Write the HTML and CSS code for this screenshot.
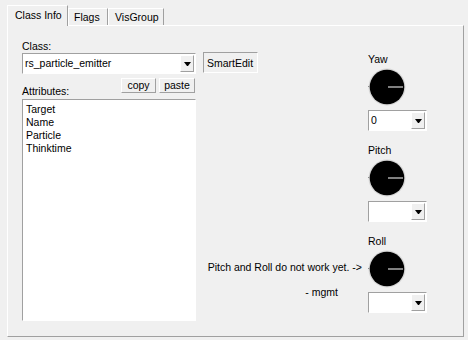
FILE: index.html
```html
<!DOCTYPE html>
<html lang="en">
  <head>
    <meta charset="UTF-8" />
    <title>Object Properties</title>
    <link rel="stylesheet" href="styles.css">
  </head>
  <body>
    <div class="dialog">
      <div class="tabs">
        <div class="tab active">Class Info</div>
        <div class="tab flags">Flags</div>
        <div class="tab visgroup">VisGroup</div>
      </div>

      <div class="panel">
        <div class="col-left">
          <div class="label">Class:</div>
          <div class="combo class-combo">
            <span class="combo-text">rs_particle_emitter</span>
            <span class="drop"></span>
          </div>
          <div class="attr-bar">
            <div class="label attr-label">Attributes:</div>
            <div class="btns">
              <button class="small-btn copy">copy</button>
              <button class="small-btn paste">paste</button>
            </div>
          </div>
          <ul class="listbox">
            <li>Target</li>
            <li>Name</li>
            <li>Particle</li>
            <li>Thinktime</li>
          </ul>
        </div>

        <div class="col-mid">
          <button class="smart-btn">SmartEdit</button>
          <div class="note">
            <p>Pitch and Roll do not work yet. -&gt;</p>
            <p class="sig">- mgmt</p>
          </div>
        </div>

        <div class="col-right">
          <div class="angle">
            <div class="label">Yaw</div>
            <svg class="dial" width="38" height="38" viewBox="0 0 38 38">
              <circle cx="19" cy="19" r="18.5" fill="#d4d4d4" />
              <circle cx="19" cy="19" r="17.3" fill="#000" />
              <rect x="20" y="18.5" width="15" height="1" fill="#fff" />
              <rect x="0" y="18" width="1" height="1" fill="#8a8a8a" />
            </svg>
            <div class="combo small-combo">
              <span class="combo-text">0</span>
              <span class="drop"></span>
            </div>
          </div>
          <div class="angle">
            <div class="label">Pitch</div>
            <svg class="dial" width="38" height="38" viewBox="0 0 38 38">
              <circle cx="19" cy="19" r="18.5" fill="#d4d4d4" />
              <circle cx="19" cy="19" r="17.3" fill="#000" />
              <rect x="20" y="18.5" width="15" height="1" fill="#fff" />
              <rect x="0" y="18" width="1" height="1" fill="#8a8a8a" />
            </svg>
            <div class="combo small-combo">
              <span class="combo-text"></span>
              <span class="drop"></span>
            </div>
          </div>
          <div class="angle">
            <div class="label">Roll</div>
            <svg class="dial" width="38" height="38" viewBox="0 0 38 38">
              <circle cx="19" cy="19" r="18.5" fill="#d4d4d4" />
              <circle cx="19" cy="19" r="17.3" fill="#000" />
              <rect x="20" y="18.5" width="15" height="1" fill="#fff" />
              <rect x="0" y="18" width="1" height="1" fill="#8a8a8a" />
            </svg>
            <div class="combo small-combo">
              <span class="combo-text"></span>
              <span class="drop"></span>
            </div>
          </div>
        </div>
      </div>
    </div>
  </body>
</html>
```

FILE: styles.css
```css
body {
  margin: 0;
  background-color: #f0f0f0;
  font-family: "Liberation Sans", Arial, sans-serif;
  font-size: 10.5px;
  line-height: 13px;
  color: #000;
}
.dialog {
  padding: 5px 0 0 7px;
}
.tabs {
  display: flex;
  align-items: flex-end;
  height: 20px;
}
.tab {
  box-sizing: border-box;
  height: 17px;
  padding: 2px 0 0 5px;
  border: 1px solid #a0a0a0;
  border-color: #fff #a0a0a0 transparent #fff;
  border-bottom: none;
}
.tab.active {
  position: relative;
  z-index: 1;
  width: 61px;
  height: 21px;
  margin-bottom: -1px;
  padding: 3px 0 0 7px;
  background-color: #f0f0f0;
}
.tab.flags {
  width: 40px;
}
.tab.visgroup {
  width: 56px;
  padding-left: 6px;
}
.panel {
  box-sizing: border-box;
  display: flex;
  width: 457px;
  height: 312px;
  padding: 14px 0 15px 14px;
  border: 1px solid;
  border-color: #fff #a0a0a0 #a0a0a0 #fff;
}
.label {
  height: 13px;
}
.col-left {
  width: 174px;
  display: flex;
  flex-direction: column;
}
.combo {
  box-sizing: border-box;
  position: relative;
  height: 21px;
  padding: 3px 0 0 2px;
  background-color: #fff;
  border: 1px solid;
  border-color: #a0a0a0 #fff #fff #a0a0a0;
}
.class-combo {
  width: 174px;
}
.drop {
  position: absolute;
  top: 1px;
  right: 1px;
  box-sizing: border-box;
  width: 14px;
  height: 17px;
  background-color: #f0f0f0;
  border: 1px solid;
  border-color: #fff #a0a0a0 #a0a0a0 #fff;
}
.drop::after {
  content: "";
  position: absolute;
  left: 3px;
  top: 6px;
  width: 1px;
  border-top: 4px solid #000;
  border-left: 3px solid transparent;
  border-right: 3px solid transparent;
}
.attr-bar {
  display: flex;
  justify-content: space-between;
  margin-top: 4px;
  height: 21px;
}
.attr-label {
  margin-top: 7px;
}
.btns {
  display: flex;
  gap: 3px;
  margin-right: 1px;
}
.small-btn,
.smart-btn {
  box-sizing: border-box;
  margin: 0;
  font-family: inherit;
  font-size: 10.5px;
  line-height: 13px;
  color: #000;
  background-color: #f0f0f0;
  border: 1px solid;
}
.small-btn {
  height: 15px;
  padding: 0;
  border-color: #fff #a0a0a0 #a0a0a0 #fff;
}
.copy {
  width: 35px;
}
.paste {
  width: 36px;
}
.listbox {
  box-sizing: border-box;
  flex: 1;
  list-style: none;
  margin: 0;
  padding: 3px 3px;
  background-color: #fff;
  border: 1px solid;
  border-color: #a0a0a0 #fff #fff #a0a0a0;
}
.col-mid {
  width: 159px;
  margin-left: 7px;
  padding: 12px 0 22px;
  display: flex;
  flex-direction: column;
  justify-content: space-between;
}
.smart-btn {
  width: 55px;
  height: 21px;
  padding: 2px 0 0 3px;
  text-align: left;
  border-color: #a0a0a0 #fff #fff #a0a0a0;
}
.note {
  text-align: right;
  white-space: nowrap;
}
.note p {
  margin: 0;
}
.note .sig {
  margin-top: 12px;
  padding-right: 24px;
}
.col-right {
  margin-left: 6px;
  padding-top: 13px;
  display: flex;
  flex-direction: column;
  gap: 13px;
}
.angle {
  display: flex;
  flex-direction: column;
}
.dial {
  display: block;
  margin: 2px 0 4px;
}
.small-combo {
  width: 59px;
}
```
